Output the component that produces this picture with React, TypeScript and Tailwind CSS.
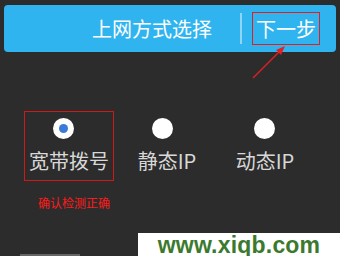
import React from "react";

const cjk = { fontFamily: '"Noto Sans CJK SC", "Noto Sans", sans-serif' };

function Radio({ checked }: { checked?: boolean }) {
  return (
    <div className="w-[21px] h-[21px] rounded-full bg-white flex items-center justify-center">
      {checked && <div className="w-[9px] h-[9px] rounded-full bg-[#3b7bd8]" />}
    </div>
  );
}

export default function App() {
  return (
    <div className="relative w-[340px] h-[256px] bg-[#2c2c2c] overflow-hidden" style={cjk}>
      <div className="pt-[5px] px-[4px]">
        <div className="h-[47px] rounded-[4px] bg-[#30b4ef] flex items-center text-white">
          <div className="w-[236px] flex justify-end pr-[28px] text-[20px] leading-[24px]">上网方式选择</div>
          <div className="w-[2px] h-[31px] bg-[#8fd6f5]" />
          <div className="ml-[10px] w-[68px] h-[33px] border border-[#e02020] flex items-center justify-center text-[20px] leading-[24px]">
            下一步
          </div>
        </div>
      </div>

      <div className="flex pl-[24px] gap-2 mt-[59px]">
        <div className="w-[90px] h-[70px] border border-[#d01818] flex flex-col items-center pt-[6px]">
          <div className="mr-[12px]"><Radio checked /></div>
          <div className="mt-[10px] text-[20px] leading-[24px] text-[#d8d8d8]">宽带拨号</div>
        </div>
        <div className="w-[90px] flex flex-col items-center pt-[7px]">
          <div className="mr-[10px]"><Radio /></div>
          <div className="mt-[10px] text-[20px] leading-[24px] text-[#d8d8d8]">静态IP</div>
        </div>
        <div className="w-[90px] flex flex-col items-center pt-[7px]">
          <div className="mr-[2px]"><Radio /></div>
          <div className="mt-[10px] text-[20px] leading-[24px] text-[#d8d8d8]">动态IP</div>
        </div>
      </div>

      <div className="pl-[38px] mt-[14px] text-[12px] leading-[16px] text-[#ff1a1a]">确认检测正确</div>

      <svg className="absolute left-0 top-0" width="340" height="256">
        <line x1="253" y1="78" x2="281" y2="50" stroke="#e52020" strokeWidth="1.2" />
        <polygon points="285,46 276,50 281,55" fill="#e52020" />
      </svg>

      <div className="absolute left-[20px] top-[254px] w-[60px] h-[2px] bg-[#666]" />

      <div className="absolute left-[138px] top-[233px] w-[202px] h-[23px] bg-white flex items-center justify-center">
        <span
          className="text-[23px] leading-[24px] font-bold text-[#3b7a2e] tracking-[0.2px]"
          style={{ fontFamily: '"Liberation Sans", Arial, sans-serif' }}
        >
          www.xiqb.com
        </span>
      </div>
    </div>
  );
}
